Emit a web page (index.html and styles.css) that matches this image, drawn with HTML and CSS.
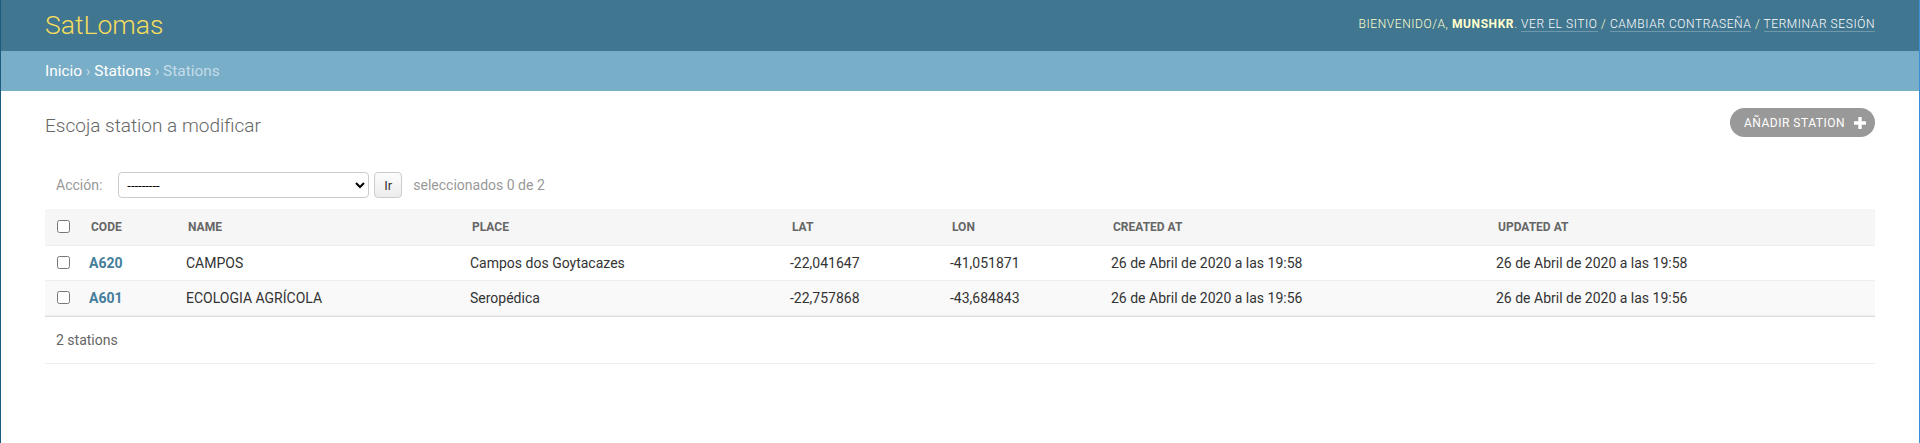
FILE: index.html
```html
<!DOCTYPE html>
<html lang="es">
<head>
<meta charset="utf-8">
<title>Escoja station a modificar | SatLomas</title>
<link rel="stylesheet" href="styles.css">
</head>
<body>
<header class="header">
  <h1 class="brand">SatLomas</h1>
  <div class="user-tools">Bienvenido/a, <strong>munshkr</strong>. <a href="#">Ver el sitio</a> / <a href="#">Cambiar contraseña</a> / <a href="#">Terminar sesión</a></div>
</header>
<nav class="breadcrumbs"><a href="#">Inicio</a> › <a href="#">Stations</a> › Stations</nav>
<main class="content">
  <div class="title-row">
    <h1 class="page-title">Escoja station a modificar</h1>
    <a class="addlink" href="#">Añadir station
      <svg class="plus" width="12" height="12" viewBox="0 0 12 12"><rect x="4.3" y="0" width="3.4" height="12" rx="0.6" fill="#fff"/><rect x="0" y="4.3" width="12" height="3.4" rx="0.6" fill="#fff"/></svg>
    </a>
  </div>
  <div class="changelist">
    <div class="actions">
      <label class="action-label">Acción:</label>
      <select class="action-select"><option>---------</option></select>
      <button class="go">Ir</button>
      <span class="counter">seleccionados 0 de 2</span>
    </div>
    <table class="results">
      <colgroup>
        <col class="w-cb"><col class="w-code"><col class="w-name"><col class="w-place"><col class="w-lat"><col class="w-lon"><col class="w-created"><col class="w-updated">
      </colgroup>
      <thead>
        <tr>
          <th class="cb"><input type="checkbox"></th>
          <th>Code</th><th>Name</th><th>Place</th><th>Lat</th><th>Lon</th><th>Created at</th><th>Updated at</th>
        </tr>
      </thead>
      <tbody>
        <tr class="row1">
          <td class="cb"><input type="checkbox"></td>
          <td><a class="code" href="#">A620</a></td><td>CAMPOS</td><td>Campos dos Goytacazes</td><td>-22,041647</td><td>-41,051871</td><td>26 de Abril de 2020 a las 19:58</td><td>26 de Abril de 2020 a las 19:58</td>
        </tr>
        <tr class="row2">
          <td class="cb"><input type="checkbox"></td>
          <td><a class="code" href="#">A601</a></td><td>ECOLOGIA AGRÍCOLA</td><td>Seropédica</td><td>-22,757868</td><td>-43,684843</td><td>26 de Abril de 2020 a las 19:56</td><td>26 de Abril de 2020 a las 19:56</td>
        </tr>
      </tbody>
    </table>
    <p class="paginator">2 stations</p>
  </div>
</main>
</body>
</html>
```
FILE: styles.css
```css
* { box-sizing: border-box; }
html { margin: 0; }
body {
  margin: 0;
  min-height: 100vh;
  font-family: Roboto, "DejaVu Sans", sans-serif;
  font-size: 14px;
  color: #333;
  background: #fff;
  border-left: 1px solid #1c5a82;
  border-right: 1px solid #3a90d8;
}
a { text-decoration: none; }

.header {
  display: flex;
  justify-content: space-between;
  align-items: center;
  height: 51px;
  padding: 0 44px 2px;
  background: #417690;
}
.brand {
  margin: 0;
  font-size: 26.5px;
  font-weight: 300;
  line-height: 30px;
  color: #f5dd5d;
}
.user-tools {
  font-size: 12px;
  font-weight: 300;
  letter-spacing: 0.58px;
  text-transform: uppercase;
  color: #ffc;
  line-height: 15px;
}
.user-tools strong { font-weight: 700; color: #ffc; }
.user-tools a { color: #fff; border-bottom: 1px solid rgba(255,255,255,0.25); }

.breadcrumbs {
  background: #79aec8;
  padding: 10px 44px;
  line-height: 20px;
  font-size: 15.4px;
  color: #c4dce8;
}
.breadcrumbs a { color: #fff; }

.content { padding: 17px 44px 0; }
.title-row {
  display: flex;
  justify-content: space-between;
  align-items: flex-end;
  height: 29px;
}
.page-title {
  margin: 0;
  font-size: 19px;
  font-weight: 300;
  color: #666;
  line-height: 22px;
}
.addlink {
  display: flex;
  align-items: center;
  gap: 9px;
  height: 29px;
  padding: 0 9px 0 14px;
  border-radius: 15px;
  background: #999;
  color: #fff;
  font-size: 12px;
  letter-spacing: 0.5px;
  text-transform: uppercase;
}
.plus { display: block; }

.changelist { margin-top: 25px; }
.actions {
  display: flex;
  align-items: center;
  padding: 10px 11px;
  margin-bottom: 1px;
  color: #999;
  font-size: 14px;
}
.action-select {
  margin-left: 16px;
  width: 251px;
  height: 26px;
  border: 1px solid #ccc;
  border-radius: 4px;
  background: #fff;
  color: #000;
  font-family: Roboto, sans-serif;
  font-size: 13px;
  padding: 0 4px;
}
.go {
  margin-left: 5px;
  width: 28px;
  height: 26px;
  padding: 0;
  border: 1px solid #ccc;
  border-radius: 4px;
  background: linear-gradient(#fdfdfd, #ececec);
  color: #333;
  font-family: Roboto, sans-serif;
  font-size: 13px;
}
.counter { margin-left: 11px; color: #999; }

.results {
  width: 100%;
  table-layout: fixed;
  border-collapse: collapse;
}
.w-cb { width: 36px; }
.w-code { width: 97px; }
.w-name { width: 284px; }
.w-place { width: 320px; }
.w-lat { width: 160px; }
.w-lon { width: 161px; }
.w-created { width: 385px; }
.w-updated { width: 387px; }

.results th {
  height: 36px;
  padding: 0 10px;
  text-align: left;
  font-size: 12px;
  font-weight: 700;
  color: #666;
  text-transform: uppercase;
  background: #f6f6f6;
  border-bottom: 1px solid #eee;
  white-space: nowrap;
}
.results td {
  height: 35px;
  padding: 0 8px;
  border-bottom: 1px solid #eee;
  white-space: nowrap;
  vertical-align: middle;
}
.results .cb { padding: 0 7px 0 12px; text-align: left; }
.results input { margin: 0; vertical-align: middle; width: 13px; height: 13px; display: block; }
.row2 td { background: #f9f9f9; }
.code { color: #447e9b; font-weight: 700; }

.paginator {
  margin: 0;
  padding: 12px 11px;
  line-height: 22px;
  color: #666;
  font-size: 14px;
  border-top: 1px solid #ddd;
  border-bottom: 1px solid #eee;
}
```
